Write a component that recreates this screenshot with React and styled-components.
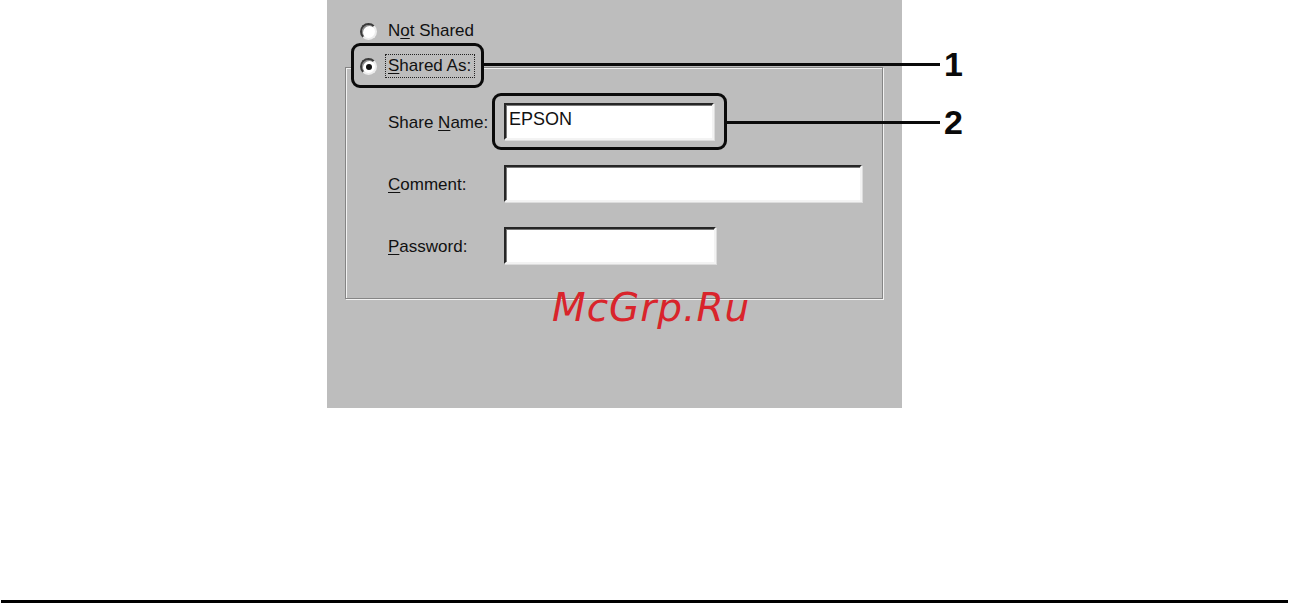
import React from 'react';
import styled, { createGlobalStyle } from 'styled-components';

const GlobalStyle = createGlobalStyle`
  html, body {
    margin: 0;
    padding: 0;
    background: #fff;
  }
  body {
    font-family: "Liberation Sans", Arial, sans-serif;
  }
`;

const Page = styled.div`
  width: 1291px;
  height: 604px;
  display: flex;
  flex-direction: column;
  overflow: hidden;
`;

const Figure = styled.div`
  position: relative;
  margin-left: 327px;
  width: 660px;
  height: 408px;
`;

const Panel = styled.div`
  width: 575px;
  height: 408px;
  box-sizing: border-box;
  background: #bdbdbd;
  padding-top: 22px;
  display: flex;
  flex-direction: column;
  color: #111;
  font-size: 17px;
`;

const RadioRow = styled.div`
  display: flex;
  align-items: center;
  gap: 11px;
  height: 18px;
  margin-left: ${(p) => p.indent || 0}px;
`;

const Radio = styled.span`
  position: relative;
  width: 17px;
  height: 17px;
  box-sizing: border-box;
  border-radius: 50%;
  background: #fff;
  border: 2px solid;
  border-color: #3a3a3a #ececec #ececec #3a3a3a;
  box-shadow: inset 1px 1px 0 #8a8a8a;
  flex: none;
  &::after {
    content: '';
    display: ${(p) => (p.checked ? 'block' : 'none')};
    position: absolute;
    left: 4px;
    top: 4px;
    width: 6px;
    height: 6px;
    border-radius: 50%;
    background: #111;
  }
`;

const Key = styled.span`
  text-decoration: underline;
  text-underline-offset: 2px;
`;

const FocusLabel = styled.span`
  padding: 3px 4px 3px 3px;
  margin-left: -3px;
  line-height: 18px;
  outline: 1px dotted #222;
  outline-offset: -1px;
`;

const GroupBox = styled.div`
  margin-top: 27px;
  margin-left: 18px;
  width: 538px;
  height: 232px;
  box-sizing: border-box;
  border: 1px solid #858585;
  box-shadow: inset 1px 1px 0 #f2f2f2, 1px 1px 0 #f2f2f2;
  display: flex;
  flex-direction: column;
`;

const Legend = styled.div`
  align-self: flex-start;
  margin-top: -12px;
  margin-left: 5px;
  padding: 0 6px 0 9px;
  height: 20px;
  display: flex;
  align-items: center;
  gap: 11px;
  background: #bdbdbd;
`;

const Fields = styled.div`
  margin-top: 27px;
  padding-left: 42px;
  display: flex;
  flex-direction: column;
  gap: 25px;
`;

const FieldRow = styled.div`
  display: flex;
  align-items: center;
  height: 37px;
`;

const Label = styled.span`
  width: 116px;
  flex: none;
  padding-top: 2px;
`;

const TextBox = styled.div`
  width: ${(p) => p.width}px;
  height: 37px;
  box-sizing: border-box;
  background: #fff;
  border: 2px solid;
  border-color: #262626 #f3f3f3 #f3f3f3 #262626;
  box-shadow: inset 1px 1px 0 #7a7a7a, 1px 1px 0 #dcdcdc;
  padding: 4px 0 0 3px;
  font-size: 18px;
  color: #111;
`;

const CalloutBox = styled.div`
  position: absolute;
  left: ${(p) => p.x}px;
  top: ${(p) => p.y}px;
  width: ${(p) => p.w}px;
  height: ${(p) => p.h}px;
  box-sizing: border-box;
  border: 3px solid #0a0a0a;
  border-radius: 9px;
`;

const LeaderLine = styled.div`
  position: absolute;
  left: ${(p) => p.x}px;
  top: ${(p) => p.y}px;
  width: ${(p) => p.w}px;
  height: 3px;
  background: #0a0a0a;
`;

const CalloutNumber = styled.span`
  position: absolute;
  left: 617px;
  top: ${(p) => p.y}px;
  font-size: 34px;
  font-weight: 700;
  line-height: 1;
  color: #0a0a0a;
`;

const Watermark = styled.span`
  position: absolute;
  left: 225px;
  top: 288px;
  font-family: "DejaVu Sans", Verdana, sans-serif;
  font-style: italic;
  font-size: 39px;
  line-height: 1;
  letter-spacing: 1px;
  color: #d9242b;
`;

const Rule = styled.div`
  margin-top: 192px;
  margin-left: 1px;
  width: 1287px;
  height: 3px;
  background: #000;
`;

export default function App() {
  return (
    <Page>
      <GlobalStyle />
      <Figure>
        <Panel>
          <RadioRow indent={33}>
            <Radio />
            <span>
              N<Key>o</Key>t Shared
            </span>
          </RadioRow>
          <GroupBox>
            <Legend>
              <Radio checked />
              <FocusLabel>
                <Key>S</Key>hared As:
              </FocusLabel>
            </Legend>
            <Fields>
              <FieldRow>
                <Label>
                  Share <Key>N</Key>ame:
                </Label>
                <TextBox width={210}>EPSON</TextBox>
              </FieldRow>
              <FieldRow>
                <Label>
                  <Key>C</Key>omment:
                </Label>
                <TextBox width={358} />
              </FieldRow>
              <FieldRow>
                <Label>
                  <Key>P</Key>assword:
                </Label>
                <TextBox width={212} />
              </FieldRow>
            </Fields>
          </GroupBox>
        </Panel>

        <CalloutBox x={24} y={43} w={133} h={45} />
        <LeaderLine x={157} y={63} w={456} />
        <CalloutNumber y={47}>1</CalloutNumber>

        <CalloutBox x={165} y={93} w={235} h={57} />
        <LeaderLine x={400} y={121} w={213} />
        <CalloutNumber y={105}>2</CalloutNumber>

        <Watermark>McGrp.Ru</Watermark>
      </Figure>
      <Rule />
    </Page>
  );
}
